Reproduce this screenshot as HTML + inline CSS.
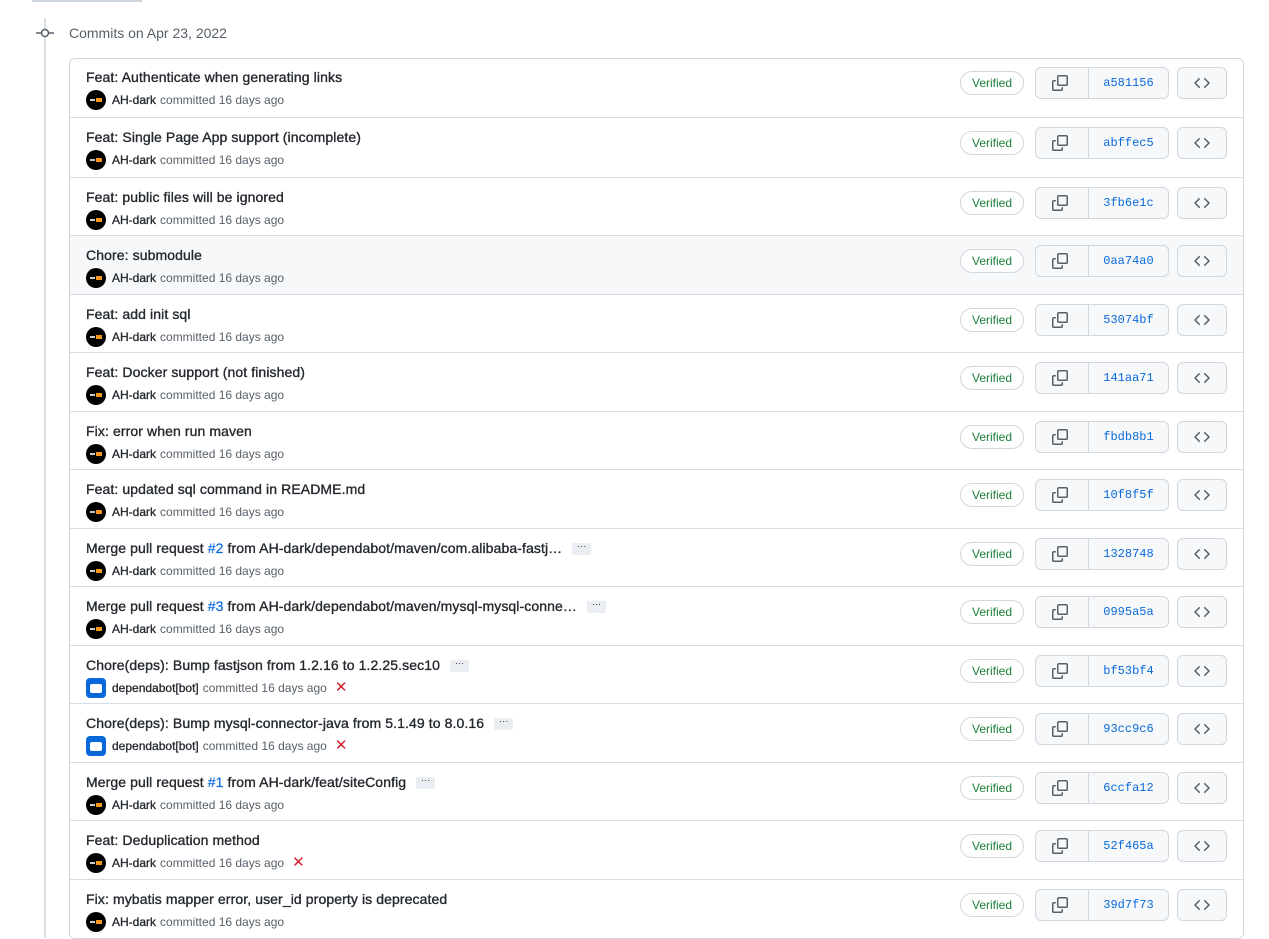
<!DOCTYPE html>
<html><head><meta charset="utf-8"><style>
*{box-sizing:border-box;margin:0;padding:0}
body{width:1269px;height:930px;overflow:hidden;background:#fff;font-family:"Liberation Sans",sans-serif;color:#24292f;position:relative}
.topbar{position:absolute;left:32px;top:0;width:110px;height:2px;background:#d0d7de}
.line{position:absolute;left:44px;top:18px;width:2px;height:920px;background:#d8dee4}
.hdr{position:absolute;left:36px;top:24px;height:18px;display:flex;align-items:center}
.hdr span{margin-left:15px;font-size:14px;color:#57606a}
.box{position:absolute;left:69px;top:58px;width:1175px;border:1px solid #d0d7de;border-radius:6px;overflow:hidden;background:#fff}
.row{position:relative;border-top:1px solid #d8dee4}
.row:first-child{border-top:none}
.row.g{background:#f6f8fa}
.t{position:absolute;left:16px;top:11px;font-size:14px;font-weight:normal;-webkit-text-stroke:0.35px #24292f;color:#24292f;white-space:nowrap;letter-spacing:0.1px}
.t a{color:#0969da;-webkit-text-stroke:0.2px #0969da}
.dots{display:inline-block;width:19px;height:12px;background:#eaeef2;border-radius:2px;font-size:9px;line-height:7px;text-align:center;vertical-align:middle;margin-left:6px;color:#24292f;-webkit-text-stroke:0}
.m{position:absolute;left:16px;top:32px;font-size:12px;color:#57606a;display:flex;align-items:center;white-space:nowrap}
.av{width:20px;height:20px;border-radius:50%;background:#000;margin-right:6px;position:relative}
.av:after{content:"";position:absolute;left:10px;top:8px;width:6px;height:4px;background:#f7971d}
.av:before{content:"";position:absolute;left:4px;top:9px;width:5px;height:2px;background:#ccc}
.bot{width:20px;height:20px;border-radius:4px;background:#0969da;margin-right:6px;position:relative}
.bot:after{content:"";position:absolute;left:4px;top:6px;width:12px;height:9px;background:#fff;border-radius:2px}
.m b{color:#24292f;font-weight:normal;-webkit-text-stroke:0.3px #24292f;margin-right:4px}
.x{color:#cf222e;font-size:15px;margin-left:8px;line-height:12px}
.v{position:absolute;left:890px;border:1px solid #d0d7de;border-radius:12px;width:64px;height:24px;font-size:12px;color:#1a7f37;text-align:center;line-height:22px;background:#fff}
.cp{position:absolute;left:965px;width:134px;height:32px;border:1px solid #d0d7de;border-radius:6px;background:#f6f8fa;display:flex}
.cp .i{width:53px;border-right:1px solid #d0d7de;display:flex;align-items:center;justify-content:center;padding-right:4px}
.cp .h{flex:1;text-align:center;line-height:30px;font-family:"Liberation Mono",monospace;font-size:12px;color:#0969da}
.cd{position:absolute;left:1107px;width:50px;height:32px;border:1px solid #d0d7de;border-radius:6px;background:#f6f8fa;display:flex;align-items:center;justify-content:center}
</style></head><body>
<div class="topbar"></div>
<div class="line"></div>
<div class="hdr"><svg width="18" height="18" viewBox="0 0 18 18"><line x1="0" y1="9" x2="5" y2="9" stroke="#57606a" stroke-width="1.5"/><line x1="13" y1="9" x2="18" y2="9" stroke="#57606a" stroke-width="1.5"/><circle cx="9" cy="9" r="3.5" fill="#fff" stroke="#57606a" stroke-width="1.5"/></svg><span>Commits on Apr 23, 2022</span></div>
<div class="box" id="box"></div>
<script>
var rows=[
["Feat: Authenticate when generating links",0,0],
["Feat: Single Page App support (incomplete)",0,0],
["Feat: public files will be ignored",0,0],
["Chore: submodule",0,0],
["Feat: add init sql",0,0],
["Feat: Docker support (not finished)",0,0],
["Fix: error when run maven",0,0],
["Feat: updated sql command in README.md",0,0],
['Merge pull request <a>#2</a> from AH-dark/dependabot/maven/com.alibaba-fastj… <span class="dots">···</span>',0,0],
['Merge pull request <a>#3</a> from AH-dark/dependabot/maven/mysql-mysql-conne… <span class="dots">···</span>',0,0],
['Chore(deps): Bump fastjson from 1.2.16 to 1.2.25.sec10 <span class="dots">···</span>',1,1],
['Chore(deps): Bump mysql-connector-java from 5.1.49 to 8.0.16 <span class="dots">···</span>',1,1],
['Merge pull request <a>#1</a> from AH-dark/feat/siteConfig <span class="dots">···</span>',0,0],
["Feat: Deduplication method",0,1],
["Fix: mybatis mapper error, user_id property is deprecated",0,0]];
var hashes=["a581156","abffec5","3fb6e1c","0aa74a0","53074bf","141aa71","fbdb8b1","10f8f5f","1328748","0995a5a","bf53bf4","93cc9c6","6ccfa12","52f465a","39d7f73"];
var hs=[58,60,58,59,58,59,58,59,58,59,58,59,58,59,59];
var copy='<svg width="16" height="16" viewBox="0 0 16 16"><path fill="#57606a" d="M0 6.75C0 5.784.784 5 1.750 5h1.5a.75.75 0 0 1 0 1.5h-1.5a.25.25 0 0 0-.25.25v7.5c0 .138.112.25.25.25h7.5a.25.25 0 0 0 .25-.25v-1.5a.75.75 0 0 1 1.5 0v1.5A1.75 1.75 0 0 1 9.25 16h-7.5A1.75 1.75 0 0 1 0 14.25v-7.5z"/><path fill="#57606a" d="M5 1.75C5 .784 5.784 0 6.75 0h7.5C15.216 0 16 .784 16 1.75v7.5A1.75 1.75 0 0 1 14.25 11h-7.5A1.75 1.75 0 0 1 5 9.25v-7.5zm1.75-.25a.25.25 0 0 0-.25.25v7.5c0 .138.112.25.25.25h7.5a.25.25 0 0 0 .25-.25v-7.5a.25.25 0 0 0-.25-.25h-7.5z"/></svg>';
var code='<svg width="16" height="16" viewBox="0 0 16 16"><path fill="#57606a" d="M4.72 3.22a.75.75 0 0 1 1.06 1.06L2.06 8l3.72 3.72a.75.75 0 1 1-1.06 1.06L.47 8.53a.75.75 0 0 1 0-1.06l4.25-4.25zm6.56 0a.75.75 0 1 0-1.06 1.06L13.94 8l-3.72 3.72a.75.75 0 1 0 1.06 1.06l4.25-4.25a.75.75 0 0 0 0-1.06l-4.25-4.25z"/></svg>';
var h='';
rows.forEach(function(r,i){
var off=i?0:-1;
h+='<div class="row'+(i==3?' g':'')+'" style="height:'+hs[i]+'px">'+
'<div class="t" style="top:'+(11+off)+'px">'+r[0]+'</div>'+
'<div class="m" style="top:'+(32+off)+'px">'+(r[1]?'<div class="bot"></div><b>dependabot[bot]</b>':'<div class="av"></div><b>AH-dark</b>')+'committed 16 days ago'+(r[2]?'<span class="x">✕</span>':'')+'</div>'+
'<div class="v" style="top:'+(13+off)+'px">Verified</div>'+
'<div class="cp" style="top:'+(9+off)+'px"><div class="i">'+copy+'</div><div class="h">'+hashes[i]+'</div></div>'+
'<div class="cd" style="top:'+(9+off)+'px">'+code+'</div></div>';
});
document.getElementById('box').innerHTML=h;
</script>
</body></html>
